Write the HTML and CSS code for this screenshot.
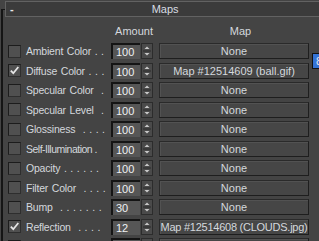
FILE: index.html
```html
<!DOCTYPE html>
<html>
<head>
<meta charset="utf-8">
<link rel="stylesheet" href="styles.css">
</head>
<body>
<div class="rollout">
  <div class="rhead"><span class="minus">-</span><span class="rtitle">Maps</span></div>
  <div class="grid colhead">
    <span></span><span></span><span class="amt-h">Amount</span><span class="map-h">Map</span>
  </div>
  <div class="grid rows">
    <span class="cb"></span><span class="lbl">Ambient Color . .</span>
    <span class="spin"><span class="inp">100</span><span class="arr"><svg width="12" height="16" viewBox="0 0 12 16"><path d="M3.5 6h5L6 3.5z M3.5 10h5L6 12.5z" fill="#c8c8c8"/><path d="M2 8h8" stroke="#2a2a2a"/></svg></span></span>
    <span class="btn"><span>None</span></span>

    <span class="cb on"><svg width="11" height="11" viewBox="0 0 11 11"><path d="M1.8 5.6l2.5 2.6 5-6.2" fill="none" stroke="#e6e6e6" stroke-width="1.8"/></svg></span><span class="lbl">Diffuse Color . . .</span>
    <span class="spin"><span class="inp">100</span><span class="arr"><svg width="12" height="16" viewBox="0 0 12 16"><path d="M3.5 6h5L6 3.5z M3.5 10h5L6 12.5z" fill="#c8c8c8"/><path d="M2 8h8" stroke="#2a2a2a"/></svg></span></span>
    <span class="btn"><span>Map #12514609 (ball.gif)</span></span>

    <span class="cb"></span><span class="lbl">Specular Color &nbsp;.</span>
    <span class="spin"><span class="inp">100</span><span class="arr"><svg width="12" height="16" viewBox="0 0 12 16"><path d="M3.5 6h5L6 3.5z M3.5 10h5L6 12.5z" fill="#c8c8c8"/><path d="M2 8h8" stroke="#2a2a2a"/></svg></span></span>
    <span class="btn"><span>None</span></span>

    <span class="cb"></span><span class="lbl">Specular Level &nbsp;.</span>
    <span class="spin"><span class="inp">100</span><span class="arr"><svg width="12" height="16" viewBox="0 0 12 16"><path d="M3.5 6h5L6 3.5z M3.5 10h5L6 12.5z" fill="#c8c8c8"/><path d="M2 8h8" stroke="#2a2a2a"/></svg></span></span>
    <span class="btn"><span>None</span></span>

    <span class="cb"></span><span class="lbl">Glossiness &nbsp;. . . .</span>
    <span class="spin"><span class="inp">100</span><span class="arr"><svg width="12" height="16" viewBox="0 0 12 16"><path d="M3.5 6h5L6 3.5z M3.5 10h5L6 12.5z" fill="#c8c8c8"/><path d="M2 8h8" stroke="#2a2a2a"/></svg></span></span>
    <span class="btn"><span>None</span></span>

    <span class="cb"></span><span class="lbl narrow">Self-Illumination .</span>
    <span class="spin"><span class="inp">100</span><span class="arr"><svg width="12" height="16" viewBox="0 0 12 16"><path d="M3.5 6h5L6 3.5z M3.5 10h5L6 12.5z" fill="#c8c8c8"/><path d="M2 8h8" stroke="#2a2a2a"/></svg></span></span>
    <span class="btn"><span>None</span></span>

    <span class="cb"></span><span class="lbl">Opacity . . . . . .</span>
    <span class="spin"><span class="inp">100</span><span class="arr"><svg width="12" height="16" viewBox="0 0 12 16"><path d="M3.5 6h5L6 3.5z M3.5 10h5L6 12.5z" fill="#c8c8c8"/><path d="M2 8h8" stroke="#2a2a2a"/></svg></span></span>
    <span class="btn"><span>None</span></span>

    <span class="cb"></span><span class="lbl">Filter Color &nbsp;. . . .</span>
    <span class="spin"><span class="inp">100</span><span class="arr"><svg width="12" height="16" viewBox="0 0 12 16"><path d="M3.5 6h5L6 3.5z M3.5 10h5L6 12.5z" fill="#c8c8c8"/><path d="M2 8h8" stroke="#2a2a2a"/></svg></span></span>
    <span class="btn"><span>None</span></span>

    <span class="cb"></span><span class="lbl">Bump &nbsp;. . . . . . .</span>
    <span class="spin"><span class="inp">30</span><span class="arr"><svg width="12" height="16" viewBox="0 0 12 16"><path d="M3.5 6h5L6 3.5z M3.5 10h5L6 12.5z" fill="#c8c8c8"/><path d="M2 8h8" stroke="#2a2a2a"/></svg></span></span>
    <span class="btn"><span>None</span></span>

    <span class="cb on"><svg width="11" height="11" viewBox="0 0 11 11"><path d="M1.8 5.6l2.5 2.6 5-6.2" fill="none" stroke="#e6e6e6" stroke-width="1.8"/></svg></span><span class="lbl">Reflection &nbsp;. . . .</span>
    <span class="spin"><span class="inp">12</span><span class="arr"><svg width="12" height="16" viewBox="0 0 12 16"><path d="M3.5 6h5L6 3.5z M3.5 10h5L6 12.5z" fill="#c8c8c8"/><path d="M2 8h8" stroke="#2a2a2a"/></svg></span></span>
    <span class="btn"><span class="tight">Map #12514608 (CLOUDS.jpg)</span></span>

    <span class="cb"></span><span class="lbl"></span>
    <span class="spin"><span class="inp"></span><span class="arr"></span></span>
    <span class="btn"><span></span></span>
  </div>
</div>
<div class="sidebtn">8</div>
</body>
</html>
```

FILE: styles.css
```css
html, body {
  margin: 0;
  padding: 0;
  background: #444444;
  overflow: hidden;
  width: 319px;
  height: 241px;
}
body {
  font-family: "Liberation Sans", Arial, sans-serif;
  font-size: 11px;
  color: #d4d8dd;
  position: relative;
}
.rollout {
  margin-top: 9px;
  margin-left: 1px;
  border-left: 2px solid #151515;
  border-top: 1px solid #151515;
  height: 400px;
}
.rhead {
  margin-top: -9px;
  margin-left: 2px;
  width: 330px;
  height: 14px;
  border: 1px solid #626262;
  background: #3b3b3b;
  display: flex;
  align-items: center;
  position: relative;
}
.minus {
  margin-left: 4px;
  color: #e8e8e8;
  font-weight: bold;
  line-height: 14px;
}
.rtitle {
  margin-left: 138px;
  color: #d8dde4;
}
.grid {
  display: grid;
  grid-template-columns: 18px 85px 48px 150px;
  padding-left: 5px;
}
.colhead {
  margin-top: 7px;
  height: 14px;
  align-items: center;
}
.amt-h {
  width: 42px;
  text-align: right;
  white-space: nowrap;
  display: flex;
  justify-content: flex-end;
}
.map-h {
  text-align: center;
  padding-left: 13px;
}
.rows {
  margin-top: 5px;
  grid-auto-rows: 16px;
  row-gap: 3.5px;
  align-items: center;
}
.cb {
  width: 11px;
  height: 11px;
  background: #505050;
  border: 1px solid #1c1c1c;
  border-right-color: #2e2e2e;
  border-bottom-color: #2e2e2e;
  display: flex;
  align-items: center;
  justify-content: center;
}
.lbl {
  white-space: nowrap;
  line-height: 16px;
  font-size: 10.5px;
  letter-spacing: -0.2px;
  word-spacing: 1px;
  min-width: 0;
}
.lbl.narrow {
  letter-spacing: -0.5px;
  word-spacing: 0;
}
.spin {
  display: flex;
  gap: 1px;
  height: 16px;
  position: relative;
}
.inp {
  width: 24px;
  height: 14px;
  background: #565656;
  border-left: 2px solid #141414;
  border-top: 2px solid #141414;
  padding-left: 3px;
  color: #eef0f2;
  line-height: 14px;
}
.arr {
  width: 12px;
  height: 16px;
  box-sizing: border-box;
  background: #4a4a4a;
  border: 1px solid #2c2c2c;
  display: flex;
  align-items: center;
  justify-content: center;
  overflow: hidden;
}
.arr svg {
  flex: none;
}
.btn {
  height: 16px;
  box-sizing: border-box;
  border: 1px solid #1e1e1e;
  border-top-color: #2a2a2a;
  border-left-color: #2a2a2a;
  background: #464646;
  box-shadow: inset 1px 1px 0 #525252;
  overflow: hidden;
  white-space: nowrap;
  color: #d4d8dd;
}
.btn span {
  display: block;
  margin: 0 -20px;
  text-align: center;
  line-height: 14px;
}
.btn .tight {
  letter-spacing: -0.25px;
}
.sidebtn {
  position: absolute;
  left: 312px;
  top: 53px;
  width: 14px;
  height: 14px;
  background: #3473d6;
  border: 1px solid #111111;
  color: #e0e8f4;
  line-height: 14px;
  padding-left: 3px;
  box-sizing: content-box;
}
```
